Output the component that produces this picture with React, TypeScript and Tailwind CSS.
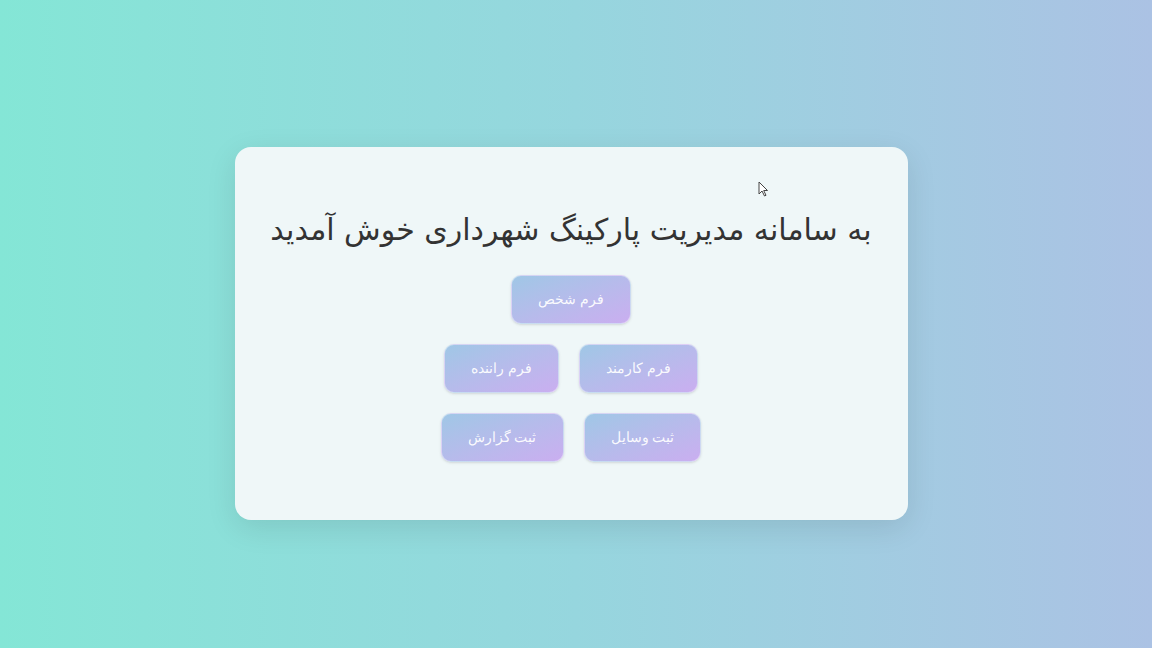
import React from 'react';

const rows: string[][] = [['فرم شخص'], ['فرم کارمند', 'فرم راننده'], ['ثبت وسایل', 'ثبت گزارش']];

const App = () => {
  return (
    <div
      dir="rtl"
      className="relative flex h-[648px] w-full flex-col items-center bg-gradient-to-r from-[#84e6d6] via-[#96d6de] to-[#abc2e4] pr-[10px] pt-[147px]"
    >
      <div className="flex h-[373px] w-[673px] flex-col items-center rounded-2xl bg-[#eff7f8] pt-[57px] shadow-[0_8px_30px_rgba(0,0,0,0.10)]">
        <h1 className="text-[30px] leading-[52px] text-[#333] [font-family:'DejaVu_Sans',sans-serif]">
          به سامانه مدیریت پارکینگ شهرداری خوش آمدید
        </h1>
        <div className="mt-[19px] flex flex-col items-center gap-5">
          {rows.map((row, i) => (
            <div key={i} className="flex gap-5">
              {row.map((label) => (
                <button
                  key={label}
                  className="h-[49px] rounded-[10px] border border-white/40 bg-gradient-to-br from-[#9fc7e6] to-[#caaef0] px-[26px] text-[14px] text-white/95 shadow-sm [font-family:'Liberation_Sans',sans-serif]"
                >
                  {label}
                </button>
              ))}
            </div>
          ))}
        </div>
      </div>
      <svg className="absolute left-[758px] top-[181px]" width="11" height="16" viewBox="0 0 11 16">
        <path d="M1 1 L1 13 L4 10 L6.5 15 L8 14.3 L5.7 9.5 L9.5 9.5 Z" fill="#fff" stroke="#444" strokeWidth="1" />
      </svg>
    </div>
  );
};

export default App;
